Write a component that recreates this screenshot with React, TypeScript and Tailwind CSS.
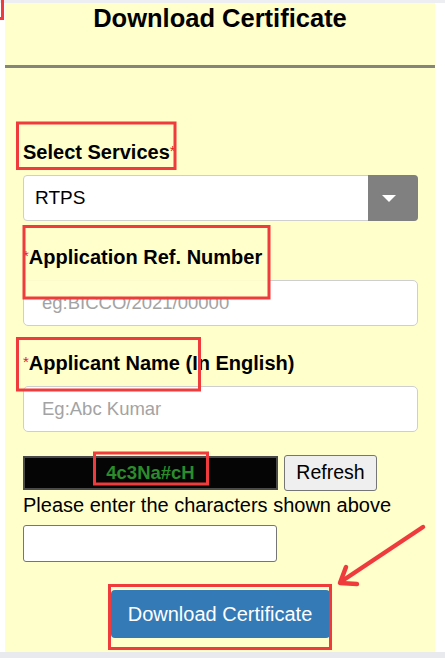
import React from 'react'

const Star = () => (
  <span className="text-[#e02020] text-[15px] font-normal leading-none relative -top-[3px]">*</span>
)

const inputClasses =
  'block w-[395px] h-[46px] rounded-[5px] border border-[#cfcfcf] bg-white pl-[18px] text-[18.5px] text-black placeholder:text-[#a3a3a3] outline-none'

export default function App() {
  return (
    <div className="relative w-[445px] h-[658px] overflow-hidden bg-white font-['Liberation_Sans',Arial,sans-serif]">
      <div className="h-[3px] bg-[#eceef1]" />
      <div className="ml-[5px] w-[430px] h-[649px] bg-[#ffffcc] flex flex-col">
        <h1 className="text-center text-[25.5px] leading-[30px] font-bold text-black">
          Download Certificate
        </h1>
        <div className="mt-[32px] h-[3px] bg-[#85857a]" />

        <div className="flex flex-col pl-[18px] pr-[17px]">
          {/* Select Services */}
          <label className="mt-[72px] text-[20px] leading-[24px] font-bold text-black">
            Select Services
            <Star />
          </label>
          <div className="mt-[11px] flex h-[46px] w-[395px] rounded-[4px] border border-[#cfcfcf] bg-white">
            <div className="flex-1 flex items-center pl-[11px] text-[19px] text-black">RTPS</div>
            <div className="w-[50px] -my-px -mr-px rounded-r-[4px] bg-[#808080] flex items-center justify-center">
              <div className="w-0 h-0 -ml-[8px] border-l-[7px] border-r-[7px] border-t-[7px] border-l-transparent border-r-transparent border-t-white" />
            </div>
          </div>

          {/* Application Ref. Number */}
          <label className="mt-[24px] text-[20px] leading-[24px] font-bold text-black">
            <Star />
            Application Ref. Number
          </label>
          <input className={`mt-[11px] ${inputClasses}`} placeholder="eg:BICCO/2021/00000" />

          {/* Applicant Name */}
          <label className="mt-[25px] text-[20px] leading-[24px] font-bold text-black">
            <Star />
            Applicant Name (In English)
          </label>
          <input className={`mt-[11px] ${inputClasses}`} placeholder="Eg:Abc Kumar" />

          {/* Captcha */}
          <div className="mt-[23px] flex items-start">
            <div className="mt-[1px] h-[34px] w-[255px] border-2 border-[#4a4a4a] bg-[#050505] flex items-center justify-center">
              <span className="text-[18.5px] font-bold text-[#2b8c2b]">4c3Na#cH</span>
            </div>
            <button className="ml-[6px] h-[36px] w-[93px] rounded-[3px] border border-[#767676] bg-[#efefef] text-[19.5px] text-black">
              Refresh
            </button>
          </div>
          <p className="mt-[1.5px] text-[20px] leading-[24px] text-black">
            Please enter the characters shown above
          </p>
          <input className="mt-[8.5px] block h-[37px] w-[254px] rounded-[3px] border border-[#767676] bg-white outline-none" />

          <div className="mt-[28px] flex justify-center -ml-[18px] -mr-[17px]">
            <button className="h-[48px] w-[219px] rounded-[4px] bg-[#337ab7] text-[20px] text-white">
              Download Certificate
            </button>
          </div>
        </div>
      </div>
      <div className="h-[6px] bg-[#e8eaed]" />

      {/* annotation overlay */}
      <svg
        className="absolute inset-0 pointer-events-none"
        width="445"
        height="658"
        viewBox="0 0 445 658"
      >
        <rect x="24" y="278" width="245" height="20" fill="#ffffcc" opacity="0.92" />
        <g fill="none" stroke="#ef3b3b" strokeWidth="3">
          <rect x="-50" y="-30" width="52.5" height="48.5" />
          <rect x="17.5" y="123" width="157.5" height="45.5" />
          <rect x="24" y="226.5" width="245" height="71.5" />
          <rect x="17.5" y="338.5" width="182" height="51.5" />
          <rect x="94.5" y="453" width="113" height="31" />
          <rect x="109.5" y="585.5" width="221" height="63" />
        </g>
        <g fill="none" stroke="#ef3b3b" strokeWidth="4.5" strokeLinecap="round" strokeLinejoin="round">
          <line x1="423" y1="527" x2="342" y2="581" />
          <polyline points="346,567 340,583 357,584" />
        </g>
      </svg>
    </div>
  )
}
